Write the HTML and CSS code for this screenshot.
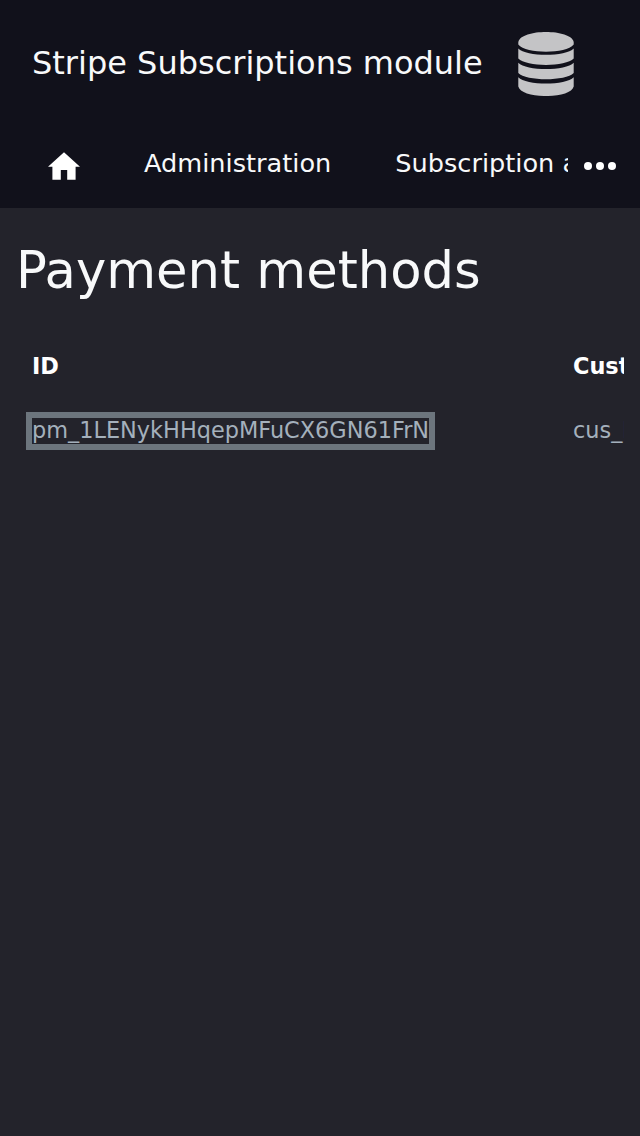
FILE: index.html
```html
<!DOCTYPE html>
<html lang="en">
<head>
<meta charset="utf-8">
<title>Payment methods</title>
<link rel="stylesheet" href="styles.css">
</head>
<body>
<header class="header">
  <div class="brand">
    <span class="brand-name">Stripe Subscriptions module</span>
    <svg class="logo" viewBox="0 0 56 64" width="56" height="64" aria-hidden="true">
      <path d="M0.3 10C3 -3.3 53 -3.3 55.7 10V12.6C48 22.2 8 22.2 0.3 12.6Z"/>
      <path d="M0.3 16.4C8 24.8 48 24.8 55.7 16.4V26.6C48 35 8 35 0.3 26.6Z"/>
      <path d="M0.3 30.8C8 39.2 48 39.2 55.7 30.8V41C48 49.3 8 49.3 0.3 41Z"/>
      <path d="M0.3 45.2C8 53.6 48 53.6 55.7 45.2V54.5C53 67.2 3 67.2 0.3 54.5Z"/>
    </svg>
  </div>
  <nav class="nav">
    <a class="home" aria-label="Home"><svg viewBox="0 0 32 28" width="32" height="28"><path d="M16 0.3L0 14.7H4.4V27.7H12.8V18H19.2V27.7H27.6V14.7H32Z"/></svg></a>
    <div class="links"><a>Administration</a><a>Subscription area</a></div>
    <a class="more" aria-label="More"><svg viewBox="0 0 32 8" width="32" height="8"><circle cx="4" cy="4" r="4"/><circle cx="16" cy="4" r="4"/><circle cx="28" cy="4" r="4"/></svg></a>
  </nav>
</header>
<main class="content">
  <h1 class="title">Payment methods</h1>
  <div class="table-wrap">
    <table class="table">
      <tr><th>ID</th><th>Customer</th></tr>
      <tr><td><a class="focused">pm_1LENykHHqepMFuCX6GN61FrN</a></td><td>cus_LwX</td></tr>
    </table>
  </div>
</main>
</body>
</html>
```
FILE: styles.css
```css
* { box-sizing: border-box; }
body { margin: 0; min-height: 1136px; background: #23232b; color: #f8f9fa; font-family: "DejaVu Sans", sans-serif; overflow: hidden; }
.header { height: 208px; background: #11111b; }
.brand { display: flex; align-items: center; height: 128px; padding-left: 32px; }
.brand-name { width: 486px; font-size: 32px; white-space: nowrap; padding-bottom: 2px; }
.logo { fill: #c4c4c6; }
.nav { display: flex; align-items: center; height: 76px; padding-right: 24px; fill: #fff; }
.home { display: flex; width: 112px; padding-left: 48px; }
.links { display: flex; gap: 64px; flex: none; width: 456px; padding: 0 0 6px 32px; overflow: hidden; font-size: 25.6px; line-height: 36px; white-space: nowrap; }
.more { display: flex; margin-left: 16px; }
.content { padding: 32px 16px; }
.title { margin: 0; font-size: 51.2px; font-weight: 400; line-height: 60px; white-space: nowrap; }
.table-wrap { margin-top: 34px; overflow: hidden; }
.table { width: 800px; table-layout: fixed; border-collapse: collapse; font-size: 22.4px; line-height: 32px; text-align: left; }
.table th { color: #fff; }
.table th, .table td { height: 64px; padding: 16px; }
.table td { color: #a4b0bc; }
.table th:first-child { width: 541px; }
.focused { display: inline-block; height: 26px; line-height: 24px; outline: 6px solid #6c757d; }
```
